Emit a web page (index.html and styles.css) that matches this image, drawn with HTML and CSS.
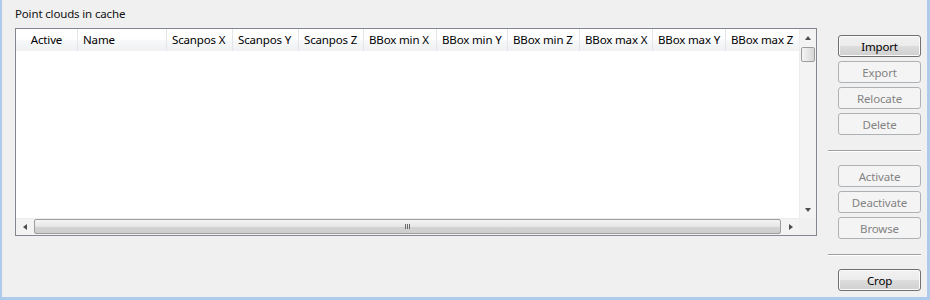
FILE: index.html
```html
<!DOCTYPE html>
<html>
<head>
  <meta charset="UTF-8">
  <title>Point clouds in cache</title>
  <link rel="stylesheet" href="styles.css">
</head>
<body>
  <div class="window">
    <div class="main">
      <div class="title">Point clouds in cache</div>
      <div class="list">
        <div class="viewport">
          <div class="header">
            <div class="col c1 center">Active</div>
            <div class="col c2">Name</div>
            <div class="col c3">Scanpos X</div>
            <div class="col c4">Scanpos Y</div>
            <div class="col c5">Scanpos Z</div>
            <div class="col c6">BBox min X</div>
            <div class="col c7">BBox min Y</div>
            <div class="col c8">BBox min Z</div>
            <div class="col c9">BBox max X</div>
            <div class="col c10">BBox max Y</div>
            <div class="col c11">BBox max Z</div>
          </div>
        </div>
        <div class="vscroll">
          <div class="sbtn"><span class="tri up"></span></div>
          <div class="vtrack"><div class="vthumb"></div></div>
          <div class="sbtn"><span class="tri down"></span></div>
        </div>
        <div class="hscroll">
          <div class="sbtn"><span class="tri left"></span></div>
          <div class="htrack"><div class="hthumb"><span class="grip"></span></div></div>
          <div class="sbtn"><span class="tri right"></span></div>
        </div>
        <div class="corner"></div>
      </div>
    </div>
    <div class="side">
      <button class="btn">Import</button>
      <button class="btn" disabled>Export</button>
      <button class="btn" disabled>Relocate</button>
      <button class="btn" disabled>Delete</button>
      <div class="sep"></div>
      <button class="btn" disabled>Activate</button>
      <button class="btn" disabled>Deactivate</button>
      <button class="btn" disabled>Browse</button>
      <div class="sep"></div>
      <button class="btn">Crop</button>
    </div>
  </div>
</body>
</html>
```

FILE: styles.css
```css
body {
  margin: 0;
  background-color: #f0f0f0;
  font-family: "Noto Sans", "Open Sans", sans-serif;
  font-size: 11.5px;
  letter-spacing: -0.15px;
  color: #000;
}
.window {
  display: flex;
  width: 930px;
  height: 300px;
  box-sizing: border-box;
  border-left: 2px solid #aecbeb;
  border-right: 3px solid #aecbeb;
  border-bottom: 3px solid #aecbeb;
  background-color: #f0f0f0;
}
.main {
  width: 802px;
  padding-left: 13px;
}
.title {
  margin-top: 6px;
  height: 16px;
  line-height: 16px;
  color: #111;
}
.list {
  margin-top: 6px;
  height: 208px;
  box-sizing: border-box;
  border: 1px solid #828790;
  background-color: white;
  display: grid;
  grid-template-columns: 1fr 17px;
  grid-template-rows: 1fr 17px;
}
.viewport {
  overflow: hidden;
}
.header {
  display: flex;
  height: 22px;
  white-space: nowrap;
}
.col {
  flex: none;
  box-sizing: border-box;
  height: 22px;
  line-height: 21px;
  padding-left: 5px;
  overflow: hidden;
  border-right: 1px solid #e2e5ea;
  background: linear-gradient(#ffffff 0%, #ffffff 45%, #f6f7f9 55%, #f0f1f3 100%);
}
.center {
  text-align: center;
  padding-left: 0;
}
.c1 { width: 62px; }
.c2 { width: 89px; }
.c3 { width: 66px; }
.c4 { width: 66px; }
.c5 { width: 65px; }
.c6 { width: 73px; }
.c7 { width: 71px; }
.c8 { width: 72px; }
.c9 { width: 73px; }
.c10 { width: 73px; }
.c11 { width: 80px; }

/* scrollbars */
.vscroll {
  display: flex;
  flex-direction: column;
  background-color: #f3f3f3;
  border-left: 1px solid #ececec;
}
.hscroll {
  display: flex;
  background-color: #f3f3f3;
  border-top: 1px solid #ececec;
}
.corner {
  background-color: #f0f0f0;
}
.sbtn {
  flex: none;
  width: 17px;
  height: 17px;
  display: flex;
  align-items: center;
  justify-content: center;
}
.vscroll .sbtn {
  width: 16px;
}
.hscroll .sbtn {
  height: 16px;
}
.tri {
  width: 0;
  height: 0;
}
.tri.up {
  border-left: 3px solid transparent;
  border-right: 3px solid transparent;
  border-bottom: 4px solid #4d4d4d;
}
.tri.down {
  border-left: 3px solid transparent;
  border-right: 3px solid transparent;
  border-top: 4px solid #4d4d4d;
}
.tri.left {
  border-top: 3px solid transparent;
  border-bottom: 3px solid transparent;
  border-right: 4px solid #4d4d4d;
}
.tri.right {
  border-top: 3px solid transparent;
  border-bottom: 3px solid transparent;
  border-left: 4px solid #4d4d4d;
}
.vtrack {
  flex: 1;
  padding: 1px 1px 0 1px;
}
.vthumb {
  height: 15px;
  box-sizing: border-box;
  border: 1px solid #9d9d9d;
  border-radius: 2px;
  background: linear-gradient(to right, #f4f4f4, #e7e7e7 50%, #d6d6d6);
}
.htrack {
  flex: 1;
  padding: 0 1px 1px 1px;
}
.hthumb {
  height: 15px;
  box-sizing: border-box;
  border: 1px solid #9d9d9d;
  border-radius: 2px;
  background: linear-gradient(#f4f4f4, #e6e6e6 50%, #d4d4d4 51%, #cdcdcd);
  display: flex;
  align-items: center;
  justify-content: center;
}
.grip {
  width: 5px;
  height: 5px;
  background: repeating-linear-gradient(to right, #6a6a6a 0, #6a6a6a 1px, transparent 1px, transparent 2px);
}

/* buttons */
.side {
  width: 93px;
  margin-left: 11px;
  padding-top: 35px;
  display: flex;
  flex-direction: column;
  align-items: flex-end;
}
.btn {
  width: 83px;
  height: 22px;
  margin-bottom: 4px;
  padding: 0;
  font-family: inherit;
  font-size: 11.5px;
  letter-spacing: -0.15px;
  color: #000;
  border: 1px solid #707070;
  border-radius: 3px;
  background: linear-gradient(#f2f2f2 0%, #ebebeb 50%, #dddddd 51%, #cfcfcf 100%);
  box-shadow: inset 0 0 0 1px #fbfbfb;
}
.btn:disabled {
  color: #838383;
  border-color: #adb2b5;
  background: #f4f4f4;
  box-shadow: none;
}
.sep {
  width: 93px;
  height: 0;
  border-top: 1px solid #a0a0a0;
  border-bottom: 1px solid #ffffff;
  margin-top: 11px;
  margin-bottom: 13px;
}
```
